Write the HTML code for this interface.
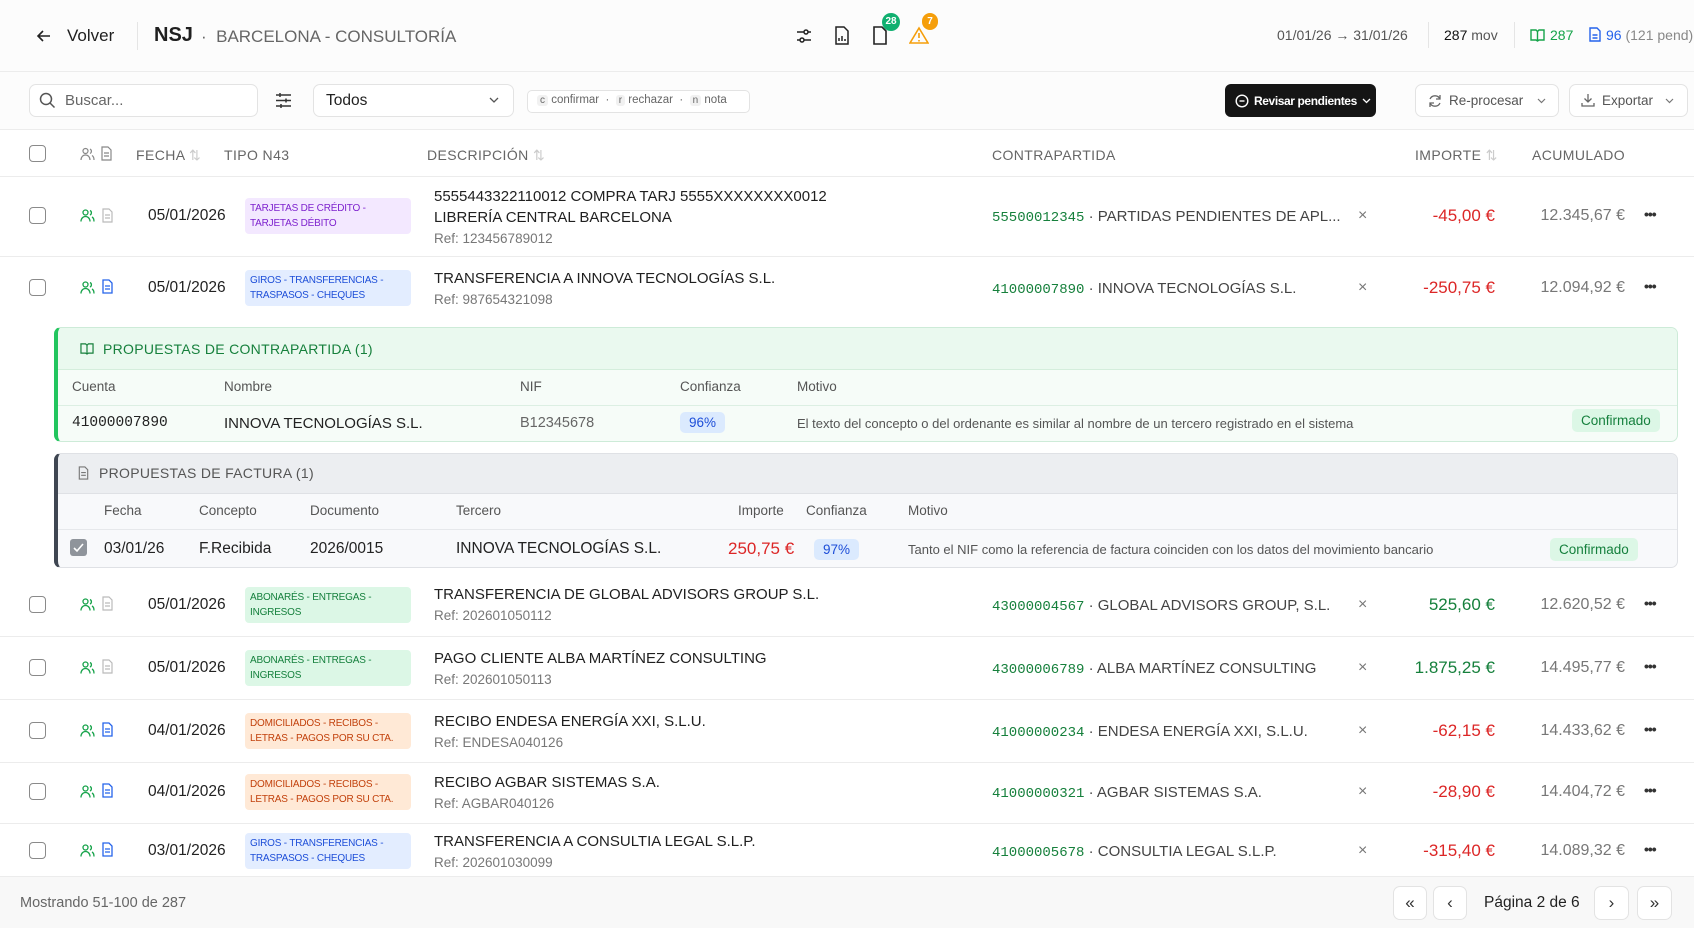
<!DOCTYPE html>
<html><head><meta charset="utf-8"><style>
*{box-sizing:border-box;margin:0;padding:0}
body{width:1694px;height:928px;overflow:hidden;background:#fff;font-family:"Liberation Sans",sans-serif;color:#1f1f1f;position:relative}
.a{position:absolute}
.t{position:absolute;white-space:nowrap}
.hl{position:absolute;left:0;width:1694px;height:1px;background:#ececec}
.cb{position:absolute;width:17px;height:17px;border:1.5px solid #8a8a8a;border-radius:4px;background:#fff}
.badge{position:absolute;left:245px;width:166px;height:36px;border-radius:4px;font-size:10px;line-height:15px;padding:3px 5px;letter-spacing:-.2px;white-space:nowrap;overflow:hidden}
.pu{background:#f3e8ff;color:#7e22ce}.bl{background:#e3edff;color:#1d4ed8}.gr{background:#dcf7e6;color:#15803d}.or{background:#ffe9d6;color:#c2410c}
.desc{left:434px;font-size:15px;color:#1f1f1f}
.ref{left:434px;font-size:13.5px;color:#777}
.code{font-family:"Liberation Mono",monospace;color:#16803c;font-size:14px}
.cp{left:992px;font-size:15px;color:#444}
.x{left:1358px;font-size:16px;color:#777}
.imp{right:199px;font-size:17px;text-align:right}
.acu{right:69px;font-size:16px;color:#777;text-align:right}
.dots{left:1644px;font-size:14px;font-weight:bold;color:#333;letter-spacing:-1px}
.date{left:148px;font-size:15.5px;color:#222}
.btn{position:absolute;border:1px solid #e3e3e3;border-radius:7px;background:#fff}
svg{position:absolute}
.pill{position:absolute;border-radius:5px;font-size:13.5px;padding:3px 9px}
</style></head><body>

<div class="a" style="left:0;top:0;width:1694px;height:130px;background:#fcfcfc"></div>
<svg style="left:36px;top:28px" width="16" height="16" viewBox="0 0 16 16"><path d="M14 8H2M7 3L2 8l5 5" fill="none" stroke="#222" stroke-width="1.6"/></svg>
<div class="t" style="left:67px;top:26px;font-size:17px">Volver</div>
<div class="a" style="left:137px;top:22px;width:1px;height:28px;background:#e5e5e5"></div>
<div class="t" style="left:154px;top:24px;font-size:20px;font-weight:bold">NSJ</div>
<div class="t" style="left:201px;top:27px;font-size:17px;color:#666">· &nbsp;BARCELONA - CONSULTORÍA</div>

<svg style="left:795px;top:27px" width="18" height="18" viewBox="0 0 18 18" fill="none" stroke="#222" stroke-width="1.5"><path d="M2 5h7M13 5h3M2 13h3M9 13h7"/><circle cx="11" cy="5" r="2"/><circle cx="7" cy="13" r="2"/></svg>
<svg style="left:834px;top:26px" width="16" height="19" viewBox="0 0 16 19" fill="none" stroke="#222" stroke-width="1.5"><path d="M2 1h8l4 4v13H2z"/><path d="M5 15v-3M8 15v-5M11 15v-2"/></svg>
<svg style="left:872px;top:26px" width="16" height="19" viewBox="0 0 16 19" fill="none" stroke="#222" stroke-width="1.6"><path d="M2 1h8l4 4v13H2z"/></svg>
<div class="a" style="left:882px;top:13px;width:18px;height:18px;border-radius:9px;background:#10b070;color:#fff;font-size:10px;text-align:center;line-height:18px;font-weight:bold">28</div>
<svg style="left:909px;top:26px" width="20" height="19" viewBox="0 0 20 19" fill="none" stroke="#f59e0b" stroke-width="1.6"><path d="M10 2L1 17h18z"/><path d="M10 7v5M10 14v1.5"/></svg>
<div class="a" style="left:922px;top:13px;width:16px;height:17px;border-radius:8px;background:#f59e0b;color:#fff;font-size:10px;text-align:center;line-height:17px;font-weight:bold">7</div>

<div class="t" style="left:1277px;top:27px;font-size:14px;color:#555">01/01/26 → 31/01/26</div>
<div class="a" style="left:1428px;top:22px;width:1px;height:26px;background:#e5e5e5"></div>
<div class="t" style="left:1444px;top:27px;font-size:14px;color:#555"><span style="color:#111">287</span> mov</div>
<div class="a" style="left:1514px;top:22px;width:1px;height:26px;background:#e5e5e5"></div>
<svg style="left:1530px;top:28px" width="15" height="14" viewBox="0 0 15 14" fill="none" stroke="#16a34a" stroke-width="1.4"><path d="M1 2h5l1.5 1.5L9 2h5v10H9l-1.5 1L6 12H1zM7.5 3.5v9"/></svg>
<div class="t" style="left:1550px;top:27px;font-size:14px;color:#16a34a">287</div>
<svg style="left:1589px;top:27px" width="12" height="15" viewBox="0 0 12 15" fill="none" stroke="#2563eb" stroke-width="1.4"><path d="M1 1h7l3 3v10H1zM3.5 8h5M3.5 11h5"/></svg>
<div class="t" style="left:1606px;top:27px;font-size:14px;color:#2563eb">96 <span style="color:#888">(121 pend)</span></div>
<div class="hl" style="top:71px"></div>

<div class="btn" style="left:29px;top:84px;width:229px;height:33px"></div>
<svg style="left:39px;top:92px" width="17" height="17" viewBox="0 0 17 17" fill="none" stroke="#555" stroke-width="1.5"><circle cx="7" cy="7" r="5.5"/><path d="M11 11l4.5 4.5"/></svg>
<div class="t" style="left:65px;top:92px;font-size:15px;color:#666">Buscar...</div>
<svg style="left:275px;top:92px" width="17" height="17" viewBox="0 0 17 17" fill="none" stroke="#333" stroke-width="1.5"><path d="M1 3h15M1 8.5h15M1 14h15M5 1v4M11 6.5v4M6 12v4"/></svg>
<div class="btn" style="left:313px;top:84px;width:201px;height:33px"></div>
<div class="t" style="left:326px;top:92px;font-size:15.5px;color:#222">Todos</div>
<svg style="left:489px;top:97px" width="10" height="7" viewBox="0 0 10 7" fill="none" stroke="#555" stroke-width="1.3"><path d="M1 1l4 4 4-4"/></svg>
<div class="btn" style="left:527px;top:90px;width:223px;height:23px;border-radius:5px"></div>
<div class="t" style="left:537px;top:94px;font-size:11.5px;color:#666"><span style="background:#f1f1f1;padding:0 3px;border-radius:3px;font-size:10px">c</span> confirmar &nbsp;·&nbsp; <span style="background:#f1f1f1;padding:0 3px;border-radius:3px;font-size:10px">r</span> rechazar &nbsp;·&nbsp; <span style="background:#f1f1f1;padding:0 3px;border-radius:3px;font-size:10px">n</span> nota</div>

<div class="a" style="left:1225px;top:84px;width:151px;height:33px;border-radius:6px;background:#151515"></div>
<svg style="left:1235px;top:94px" width="14" height="14" viewBox="0 0 14 14" fill="none" stroke="#fff" stroke-width="1.4"><circle cx="7" cy="7" r="5.8"/><path d="M4.5 7h5"/></svg>
<div class="t" style="left:1254px;top:94px;font-size:12px;color:#fff;font-weight:bold;letter-spacing:-.4px">Revisar pendientes</div>
<svg style="left:1362px;top:98px" width="9" height="6" viewBox="0 0 9 6" fill="none" stroke="#fff" stroke-width="1.3"><path d="M1 1l3.5 3.5L8 1"/></svg>
<div class="btn" style="left:1415px;top:84px;width:144px;height:33px"></div>
<svg style="left:1428px;top:94px" width="14" height="14" viewBox="0 0 14 14" fill="none" stroke="#666" stroke-width="1.3"><path d="M12 5A5.5 5.5 0 0 0 2 5M2 9a5.5 5.5 0 0 0 10 0M12 1v4H8M2 13V9h4"/></svg>
<div class="t" style="left:1449px;top:93px;font-size:13.5px;color:#555">Re-procesar</div>
<svg style="left:1537px;top:98px" width="9" height="6" viewBox="0 0 9 6" fill="none" stroke="#777" stroke-width="1.2"><path d="M1 1l3.5 3.5L8 1"/></svg>
<div class="btn" style="left:1569px;top:84px;width:119px;height:33px"></div>
<svg style="left:1581px;top:93px" width="14" height="14" viewBox="0 0 14 14" fill="none" stroke="#666" stroke-width="1.3"><path d="M7 1v8M3.5 5.5L7 9l3.5-3.5M1 10v3h12v-3"/></svg>
<div class="t" style="left:1602px;top:93px;font-size:13.5px;color:#555">Exportar</div>
<svg style="left:1665px;top:98px" width="9" height="6" viewBox="0 0 9 6" fill="none" stroke="#777" stroke-width="1.2"><path d="M1 1l3.5 3.5L8 1"/></svg>
<div class="hl" style="top:129px"></div>

<div class="cb" style="left:29px;top:145px"></div>
<svg style="left:80px;top:147px" width="15" height="14" viewBox="0 0 15 14" fill="none" stroke="#888" stroke-width="1.2"><circle cx="5.5" cy="4" r="2.5"/><path d="M1 13c0-3 2-5 4.5-5s4.5 2 4.5 5M10 2a2.5 2.5 0 0 1 0 4.5M12 8.5c1.5.8 2 2.5 2 4.5"/></svg>
<svg style="left:101px;top:146px" width="11" height="15" viewBox="0 0 11 15" fill="none" stroke="#888" stroke-width="1.2"><path d="M1 1h6l3 3v10H1zM3 7h5M3 10h5"/></svg>
<div class="t" style="left:136px;top:147px;font-size:14px;color:#666;letter-spacing:.4px">FECHA <span style="color:#ccc">⇅</span></div>
<div class="t" style="left:224px;top:147px;font-size:14px;color:#666;letter-spacing:.4px">TIPO N43</div>
<div class="t" style="left:427px;top:147px;font-size:14px;color:#666;letter-spacing:.4px">DESCRIPCIÓN <span style="color:#ccc">⇅</span></div>
<div class="t" style="left:992px;top:147px;font-size:14px;color:#666;letter-spacing:.4px">CONTRAPARTIDA</div>
<div class="t" style="left:1415px;top:147px;font-size:14px;color:#666;letter-spacing:.4px">IMPORTE <span style="color:#ccc">⇅</span></div>
<div class="t" style="left:1532px;top:147px;font-size:14px;color:#666;letter-spacing:.4px">ACUMULADO</div>
<div class="hl" style="top:176px"></div>

<div class="cb" style="left:29px;top:207px"></div>
<svg style="left:80px;top:208px" width="15" height="15" viewBox="0 0 15 14" fill="none" stroke="#16a34a" stroke-width="1.3"><circle cx="5.5" cy="4" r="2.5"/><path d="M1 13c0-3 2-5 4.5-5s4.5 2 4.5 5M10 2a2.5 2.5 0 0 1 0 4.5M12 8.5c1.5.8 2 2.5 2 4.5"/></svg>
<svg style="left:102px;top:208px" width="11" height="15" viewBox="0 0 11 15" fill="none" stroke="#bbb" stroke-width="1.2"><path d="M1 1h6l3 3v10H1zM3 7h5M3 10h5"/></svg>
<div class="t date" style="top:207px">05/01/2026</div>
<div class="badge pu" style="top:198px">TARJETAS DE CRÉDITO -<br>TARJETAS DÉBITO</div>
<div class="t desc" style="top:188px">5555443322110012 COMPRA TARJ 5555XXXXXXXX0012</div>
<div class="t desc" style="top:209px">LIBRERÍA CENTRAL BARCELONA</div>
<div class="t ref" style="top:231px">Ref: 123456789012</div>
<div class="t cp" style="top:208px"><span class="code">55500012345</span> · PARTIDAS PENDIENTES DE APL...</div>
<div class="t x" style="top:207px">×</div>
<div class="t imp" style="top:206px;color:#dc2626">-45,00 €</div>
<div class="t acu" style="top:207px">12.345,67 €</div>
<div class="t dots" style="top:206px">•••</div>
<div class="hl" style="top:256px"></div>

<div class="cb" style="left:29px;top:279px"></div>
<svg style="left:80px;top:280px" width="15" height="15" viewBox="0 0 15 14" fill="none" stroke="#16a34a" stroke-width="1.3"><circle cx="5.5" cy="4" r="2.5"/><path d="M1 13c0-3 2-5 4.5-5s4.5 2 4.5 5M10 2a2.5 2.5 0 0 1 0 4.5M12 8.5c1.5.8 2 2.5 2 4.5"/></svg>
<svg style="left:102px;top:279px" width="11" height="15" viewBox="0 0 11 15" fill="none" stroke="#2563eb" stroke-width="1.3"><path d="M1 1h6l3 3v10H1zM3 7h5M3 10h5"/></svg>
<div class="t date" style="top:279px">05/01/2026</div>
<div class="badge bl" style="top:270px">GIROS - TRANSFERENCIAS -<br>TRASPASOS - CHEQUES</div>
<div class="t desc" style="top:270px">TRANSFERENCIA A INNOVA TECNOLOGÍAS S.L.</div>
<div class="t ref" style="top:292px">Ref: 987654321098</div>
<div class="t cp" style="top:280px"><span class="code">41000007890</span> · INNOVA TECNOLOGÍAS S.L.</div>
<div class="t x" style="top:279px">×</div>
<div class="t imp" style="top:278px;color:#dc2626">-250,75 €</div>
<div class="t acu" style="top:279px">12.094,92 €</div>
<div class="t dots" style="top:278px">•••</div>

<div class="a" style="left:54px;top:327px;width:1624px;height:115px;border:1px solid #cdebd8;border-left:4px solid #22c55e;border-radius:7px;background:#f6fcf8;overflow:hidden">
 <div class="a" style="left:0;top:0;width:100%;height:42px;background:#eaf9ef;border-bottom:1px solid #d4eedc"></div>
 <div class="a" style="left:0;top:77px;width:100%;height:1px;background:#dcefe3"></div>
</div>
<svg style="left:80px;top:342px" width="14" height="13" viewBox="0 0 15 14" fill="none" stroke="#16803c" stroke-width="1.3"><path d="M1 2h5l1.5 1.5L9 2h5v10H9l-1.5 1L6 12H1zM7.5 3.5v9"/></svg>
<div class="t" style="left:103px;top:341px;font-size:14px;color:#16803c;letter-spacing:.3px">PROPUESTAS DE CONTRAPARTIDA (1)</div>
<div class="t" style="left:72px;top:379px;font-size:13.5px;color:#555">Cuenta</div>
<div class="t" style="left:224px;top:379px;font-size:13.5px;color:#555">Nombre</div>
<div class="t" style="left:520px;top:379px;font-size:13.5px;color:#555">NIF</div>
<div class="t" style="left:680px;top:379px;font-size:13.5px;color:#555">Confianza</div>
<div class="t" style="left:797px;top:379px;font-size:13.5px;color:#555">Motivo</div>
<div class="t" style="left:72px;top:415px;font-size:14.5px;font-family:'Liberation Mono',monospace;color:#222">41000007890</div>
<div class="t" style="left:224px;top:415px;font-size:15px;color:#222">INNOVA TECNOLOGÍAS S.L.</div>
<div class="t" style="left:520px;top:415px;font-size:14.5px;color:#666">B12345678</div>
<div class="pill" style="left:680px;top:412px;background:#dbeafe;color:#1d4ed8">96%</div>
<div class="t" style="left:797px;top:416px;font-size:13px;color:#555">El texto del concepto o del ordenante es similar al nombre de un tercero registrado en el sistema</div>
<div class="pill" style="left:1572px;top:409px;background:#dcf7e6;color:#15803d;padding:4px 9px">Confirmado</div>

<div class="a" style="left:54px;top:453px;width:1624px;height:115px;border:1px solid #dfe1e5;border-left:4px solid #3f4652;border-radius:7px;background:#f8f9fb;overflow:hidden">
 <div class="a" style="left:0;top:0;width:100%;height:40px;background:#eceef1;border-bottom:1px solid #dfe1e5"></div>
 <div class="a" style="left:0;top:75px;width:100%;height:1px;background:#e6e8eb"></div>
</div>
<svg style="left:78px;top:466px" width="11" height="14" viewBox="0 0 11 15" fill="none" stroke="#777" stroke-width="1.2"><path d="M1 1h6l3 3v10H1zM3 7h5M3 10h5"/></svg>
<div class="t" style="left:99px;top:465px;font-size:14px;color:#555;letter-spacing:.3px">PROPUESTAS DE FACTURA (1)</div>
<div class="t" style="left:104px;top:503px;font-size:13.5px;color:#555">Fecha</div>
<div class="t" style="left:199px;top:503px;font-size:13.5px;color:#555">Concepto</div>
<div class="t" style="left:310px;top:503px;font-size:13.5px;color:#555">Documento</div>
<div class="t" style="left:456px;top:503px;font-size:13.5px;color:#555">Tercero</div>
<div class="t" style="left:738px;top:503px;font-size:13.5px;color:#555">Importe</div>
<div class="t" style="left:806px;top:503px;font-size:13.5px;color:#555">Confianza</div>
<div class="t" style="left:908px;top:503px;font-size:13.5px;color:#555">Motivo</div>
<div class="a" style="left:70px;top:539px;width:17px;height:17px;border-radius:3px;background:#8f949b"></div>
<svg style="left:72px;top:541px" width="13" height="13" viewBox="0 0 13 13" fill="none" stroke="#fff" stroke-width="1.6"><path d="M2 7l3 3 6-7"/></svg>
<div class="t" style="left:104px;top:540px;font-size:15.5px;color:#222">03/01/26</div>
<div class="t" style="left:199px;top:540px;font-size:15.5px;color:#222">F.Recibida</div>
<div class="t" style="left:310px;top:540px;font-size:15.5px;color:#222">2026/0015</div>
<div class="t" style="left:456px;top:540px;font-size:15.5px;color:#222">INNOVA TECNOLOGÍAS S.L.</div>
<div class="t" style="left:728px;top:539px;font-size:17px;color:#dc2626">250,75 €</div>
<div class="pill" style="left:814px;top:539px;background:#dbeafe;color:#1d4ed8">97%</div>
<div class="t" style="left:908px;top:542px;font-size:13px;color:#555">Tanto el NIF como la referencia de factura coinciden con los datos del movimiento bancario</div>
<div class="pill" style="left:1550px;top:538px;background:#dcf7e6;color:#15803d;padding:4px 9px">Confirmado</div>

<div class="cb" style="left:29px;top:596px"></div>
<svg style="left:80px;top:597px" width="15" height="15" viewBox="0 0 15 14" fill="none" stroke="#16a34a" stroke-width="1.3"><circle cx="5.5" cy="4" r="2.5"/><path d="M1 13c0-3 2-5 4.5-5s4.5 2 4.5 5M10 2a2.5 2.5 0 0 1 0 4.5M12 8.5c1.5.8 2 2.5 2 4.5"/></svg>
<svg style="left:102px;top:596px" width="11" height="15" viewBox="0 0 11 15" fill="none" stroke="#bbb" stroke-width="1.2"><path d="M1 1h6l3 3v10H1zM3 7h5M3 10h5"/></svg>
<div class="t date" style="top:596px">05/01/2026</div>
<div class="badge gr" style="top:587px">ABONARÉS - ENTREGAS -<br>INGRESOS</div>
<div class="t desc" style="top:586px">TRANSFERENCIA DE GLOBAL ADVISORS GROUP S.L.</div>
<div class="t ref" style="top:608px">Ref: 202601050112</div>
<div class="t cp" style="top:597px"><span class="code">43000004567</span> · GLOBAL ADVISORS GROUP, S.L.</div>
<div class="t x" style="top:596px">×</div>
<div class="t imp" style="top:595px;color:#16803c">525,60 €</div>
<div class="t acu" style="top:596px">12.620,52 €</div>
<div class="t dots" style="top:595px">•••</div>
<div class="hl" style="top:636px"></div>

<div class="cb" style="left:29px;top:659px"></div>
<svg style="left:80px;top:660px" width="15" height="15" viewBox="0 0 15 14" fill="none" stroke="#16a34a" stroke-width="1.3"><circle cx="5.5" cy="4" r="2.5"/><path d="M1 13c0-3 2-5 4.5-5s4.5 2 4.5 5M10 2a2.5 2.5 0 0 1 0 4.5M12 8.5c1.5.8 2 2.5 2 4.5"/></svg>
<svg style="left:102px;top:659px" width="11" height="15" viewBox="0 0 11 15" fill="none" stroke="#bbb" stroke-width="1.2"><path d="M1 1h6l3 3v10H1zM3 7h5M3 10h5"/></svg>
<div class="t date" style="top:659px">05/01/2026</div>
<div class="badge gr" style="top:650px">ABONARÉS - ENTREGAS -<br>INGRESOS</div>
<div class="t desc" style="top:650px">PAGO CLIENTE ALBA MARTÍNEZ CONSULTING</div>
<div class="t ref" style="top:672px">Ref: 202601050113</div>
<div class="t cp" style="top:660px"><span class="code">43000006789</span> · ALBA MARTÍNEZ CONSULTING</div>
<div class="t x" style="top:659px">×</div>
<div class="t imp" style="top:658px;color:#16803c">1.875,25 €</div>
<div class="t acu" style="top:659px">14.495,77 €</div>
<div class="t dots" style="top:658px">•••</div>
<div class="hl" style="top:699px"></div>

<div class="cb" style="left:29px;top:722px"></div>
<svg style="left:80px;top:723px" width="15" height="15" viewBox="0 0 15 14" fill="none" stroke="#16a34a" stroke-width="1.3"><circle cx="5.5" cy="4" r="2.5"/><path d="M1 13c0-3 2-5 4.5-5s4.5 2 4.5 5M10 2a2.5 2.5 0 0 1 0 4.5M12 8.5c1.5.8 2 2.5 2 4.5"/></svg>
<svg style="left:102px;top:722px" width="11" height="15" viewBox="0 0 11 15" fill="none" stroke="#2563eb" stroke-width="1.3"><path d="M1 1h6l3 3v10H1zM3 7h5M3 10h5"/></svg>
<div class="t date" style="top:722px">04/01/2026</div>
<div class="badge or" style="top:713px">DOMICILIADOS - RECIBOS -<br>LETRAS - PAGOS POR SU CTA.</div>
<div class="t desc" style="top:713px">RECIBO ENDESA ENERGÍA XXI, S.L.U.</div>
<div class="t ref" style="top:735px">Ref: ENDESA040126</div>
<div class="t cp" style="top:723px"><span class="code">41000000234</span> · ENDESA ENERGÍA XXI, S.L.U.</div>
<div class="t x" style="top:722px">×</div>
<div class="t imp" style="top:721px;color:#dc2626">-62,15 €</div>
<div class="t acu" style="top:722px">14.433,62 €</div>
<div class="t dots" style="top:721px">•••</div>
<div class="hl" style="top:762px"></div>

<div class="cb" style="left:29px;top:783px"></div>
<svg style="left:80px;top:784px" width="15" height="15" viewBox="0 0 15 14" fill="none" stroke="#16a34a" stroke-width="1.3"><circle cx="5.5" cy="4" r="2.5"/><path d="M1 13c0-3 2-5 4.5-5s4.5 2 4.5 5M10 2a2.5 2.5 0 0 1 0 4.5M12 8.5c1.5.8 2 2.5 2 4.5"/></svg>
<svg style="left:102px;top:783px" width="11" height="15" viewBox="0 0 11 15" fill="none" stroke="#2563eb" stroke-width="1.3"><path d="M1 1h6l3 3v10H1zM3 7h5M3 10h5"/></svg>
<div class="t date" style="top:783px">04/01/2026</div>
<div class="badge or" style="top:774px">DOMICILIADOS - RECIBOS -<br>LETRAS - PAGOS POR SU CTA.</div>
<div class="t desc" style="top:774px">RECIBO AGBAR SISTEMAS S.A.</div>
<div class="t ref" style="top:796px">Ref: AGBAR040126</div>
<div class="t cp" style="top:784px"><span class="code">41000000321</span> · AGBAR SISTEMAS S.A.</div>
<div class="t x" style="top:783px">×</div>
<div class="t imp" style="top:782px;color:#dc2626">-28,90 €</div>
<div class="t acu" style="top:783px">14.404,72 €</div>
<div class="t dots" style="top:782px">•••</div>
<div class="hl" style="top:823px"></div>

<div class="cb" style="left:29px;top:842px"></div>
<svg style="left:80px;top:843px" width="15" height="15" viewBox="0 0 15 14" fill="none" stroke="#16a34a" stroke-width="1.3"><circle cx="5.5" cy="4" r="2.5"/><path d="M1 13c0-3 2-5 4.5-5s4.5 2 4.5 5M10 2a2.5 2.5 0 0 1 0 4.5M12 8.5c1.5.8 2 2.5 2 4.5"/></svg>
<svg style="left:102px;top:842px" width="11" height="15" viewBox="0 0 11 15" fill="none" stroke="#2563eb" stroke-width="1.3"><path d="M1 1h6l3 3v10H1zM3 7h5M3 10h5"/></svg>
<div class="t date" style="top:842px">03/01/2026</div>
<div class="badge bl" style="top:833px">GIROS - TRANSFERENCIAS -<br>TRASPASOS - CHEQUES</div>
<div class="t desc" style="top:833px">TRANSFERENCIA A CONSULTIA LEGAL S.L.P.</div>
<div class="t ref" style="top:855px">Ref: 202601030099</div>
<div class="t cp" style="top:843px"><span class="code">41000005678</span> · CONSULTIA LEGAL S.L.P.</div>
<div class="t x" style="top:842px">×</div>
<div class="t imp" style="top:841px;color:#dc2626">-315,40 €</div>
<div class="t acu" style="top:842px">14.089,32 €</div>
<div class="t dots" style="top:841px">•••</div>
<div class="hl" style="top:876px"></div>

<div class="a" style="left:0;top:877px;width:1694px;height:51px;background:#f8f8f8"></div>
<div class="t" style="left:20px;top:895px;font-size:14.5px;color:#666">Mostrando 51-100 de 287</div>
<div class="btn" style="left:1393px;top:886px;width:34px;height:34px;text-align:center;line-height:31px;font-size:17px;color:#333">«</div>
<div class="btn" style="left:1433px;top:886px;width:34px;height:34px;text-align:center;line-height:31px;font-size:17px;color:#333">‹</div>
<div class="t" style="left:1484px;top:894px;font-size:15.5px;color:#222">Página 2 de 6</div>
<div class="btn" style="left:1594px;top:886px;width:35px;height:34px;text-align:center;line-height:31px;font-size:17px;color:#333">›</div>
<div class="btn" style="left:1637px;top:886px;width:35px;height:34px;text-align:center;line-height:31px;font-size:17px;color:#333">»</div>
</body></html>
